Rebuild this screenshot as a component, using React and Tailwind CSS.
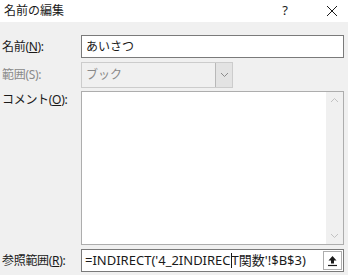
import React from 'react';

const font = { fontFamily: '"Noto Sans", "Noto Sans CJK JP", sans-serif' };

function Chevron({ up }) {
  return (
    <svg width="9" height="6" viewBox="0 0 9 6" className="block">
      <path d={up ? 'M1 5 L4.5 1.5 L8 5' : 'M1 1 L4.5 4.5 L8 1'} fill="none" stroke="currentColor" strokeWidth="1" />
    </svg>
  );
}

function Label({ children, disabled }) {
  return (
    <div className={`w-[81px] shrink-0 pl-[2px] text-[12px] leading-none tracking-[-0.3px] ${disabled ? 'text-[#8a8a8a]' : 'text-[#1a1a1a]'}`}>
      {children}
    </div>
  );
}

export default function App() {
  return (
    <div className="w-[348px] h-[275px] bg-[#f0f0f0] overflow-hidden" style={font}>
      {/* title bar */}
      <div className="h-[22px] bg-white flex items-center text-[12px] text-[#1a1a1a]">
        <span className="pl-[4px]">名前の編集</span>
        <span className="ml-auto mr-[38px] text-[13px]">?</span>
        <svg width="12" height="12" viewBox="0 0 12 12" className="mr-[10px]">
          <path d="M1 1 L11 11 M11 1 L1 11" stroke="#1a1a1a" strokeWidth="1" />
        </svg>
      </div>

      <div className="flex flex-col pt-[13px]">
        {/* name */}
        <div className="flex items-center h-[23px]">
          <Label>名前(<span className="underline">N</span>):</Label>
          <div className="w-[263px] h-[23px] bg-white border border-[#7a7a7a] flex items-center pl-[4px] text-[12px] text-[#1a1a1a]">
            あいさつ
          </div>
        </div>

        {/* scope */}
        <div className="flex items-center h-[26px] mt-[4px]">
          <Label disabled>範囲(S):</Label>
          <div className="w-[152px] h-[26px] border border-[#cccccc] bg-[#f0f0f0] flex items-stretch">
            <div className="flex-1 flex items-center pl-[4px] text-[12px] text-[#8a8a8a]">ブック</div>
            <div className="w-[17px] bg-[#e3e3e3] border-l border-[#b8b8b8] flex items-center justify-center text-[#8a8a8a]">
              <Chevron />
            </div>
          </div>
        </div>

        {/* comment */}
        <div className="flex items-start h-[154px] mt-[3px]">
          <div className="pt-[3px]">
            <Label>コメント(<span className="underline">O</span>):</Label>
          </div>
          <div className="w-[263px] h-[154px] bg-white border border-[#adadad] flex justify-end">
            <div className="w-[17px] bg-[#f0f0f0] flex flex-col justify-between items-center py-[5px] text-[#c2c2c2]">
              <Chevron up />
              <Chevron />
            </div>
          </div>
        </div>

        {/* reference */}
        <div className="flex items-center h-[23px] mt-[4px]">
          <Label>参照範囲(<span className="underline">R</span>):</Label>
          <div className="w-[263px] h-[23px] bg-white border border-[#7a7a7a] flex items-center">
            <div className="flex-1 pl-[3px] text-[13px] text-[#1a1a1a] whitespace-nowrap flex items-center">
              <span>=INDIRECT('4_2INDIREC</span>
              <span className="inline-block w-px h-[15px] bg-[#1a1a1a]" />
              <span>T関数'!$B$3)</span>
            </div>
            <div className="w-[19px] h-[19px] mr-[1px] border border-[#adadad] bg-white flex items-center justify-center">
              <svg width="11" height="12" viewBox="0 0 11 12">
                <path d="M5.5 1 L1.5 5.5 L4 5.5 L4 8.5 L7 8.5 L7 5.5 L9.5 5.5 Z" fill="#1a1a1a" />
                <path d="M1 10.5 L10 10.5" stroke="#1a1a1a" strokeWidth="1.2" />
              </svg>
            </div>
          </div>
        </div>
      </div>
    </div>
  );
}
